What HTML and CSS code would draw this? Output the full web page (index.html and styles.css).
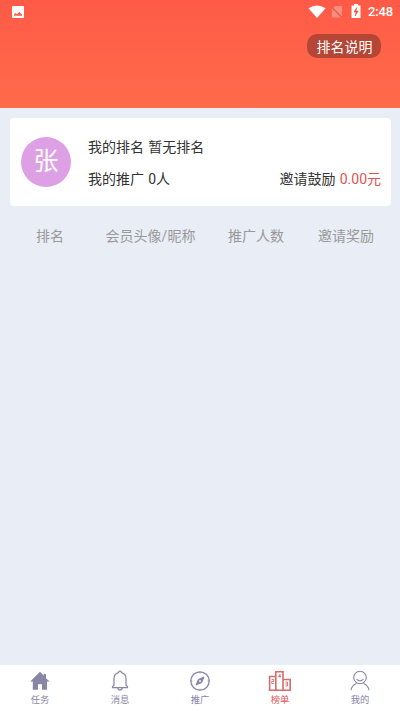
FILE: index.html
```html
<!DOCTYPE html>
<html lang="zh-CN">
<head>
<meta charset="utf-8">
<title>榜单</title>
<link rel="stylesheet" href="styles.css">
</head>
<body>
<header class="hero">
  <div class="status">
    <svg class="picture" width="12" height="12" viewBox="0 0 12 12"><rect width="12" height="12" rx="1" fill="#fff"/><path d="M2 9.700V8.500L3.500 7l1.300 1.200L7.300 6 10 8.500v1.200z" fill="#ff6048"/></svg>
    <svg class="wifi" width="18" height="14" viewBox="0 0 18 14"><path d="M.5 3.300Q9-2.100 17.500 3.300L9 13z" fill="#fff"/></svg>
    <svg class="sim" width="12" height="14" viewBox="0 0 12 14"><path d="M4 1h7v11.500H1V4z" fill="#ff8e7d"/><path d="M0 1.500 11.500 13" stroke="#e85a48" stroke-width="1.300"/></svg>
    <svg class="battery" width="10" height="15" viewBox="0 0 10 15"><path d="M3 0h4v1.500h2.500V14H.5V1.500H3z" fill="#fff"/><path d="M5.800 3.500 3 8h2l-.8 4L7.200 7H5.100z" fill="#ee4e39" stroke="#ee4e39" stroke-width=".5"/></svg>
    <span class="clock">2:48</span>
  </div>
  <button class="rules">排名说明</button>
</header>
<main class="content">
  <section class="card">
    <div class="avatar">张</div>
    <div class="details">
      <div class="line">我的排名 暂无排名</div>
      <div class="line"><span>我的推广 0人</span><span>邀请鼓励 <b class="amount">0.00元</b></span></div>
    </div>
  </section>
  <div class="columns"><span>排名</span><span>会员头像/昵称</span><span>推广人数</span><span>邀请奖励</span></div>
</main>
<nav class="tabs">
  <a class="tab"><svg width="24" height="24" viewBox="0 0 24 24"><path d="M12 2.800 2.200 12.500h2.600V20.800H10v-5.500h4v5.500h5v-8.300h2.700L18 9.200V5h-2.200v1.700z" fill="#8985a5"/></svg><span>任务</span></a>
  <a class="tab"><svg width="24" height="24" viewBox="0 0 24 24" fill="none" stroke="#8985a5" stroke-width="1.200"><path d="M10.500 3.700a1.500 1.500 0 0 1 3 0C16.700 4.500 18 7 18 10v6l1.500 1.700v1h-15v-1L6 16v-6c0-3 1.300-5.500 4.500-6.300zM9.700 18.700c.2 3 4.400 3 4.600 0"/></svg><span>消息</span></a>
  <a class="tab"><svg width="24" height="24" viewBox="0 0 24 24" fill="none" stroke="#8985a5"><circle cx="12" cy="12" r="9.200" stroke-width="1.300"/><path d="m16 8-2.400 5.600L8 16l2.400-5.600z" fill="#8985a5"/><circle cx="12" cy="12" r=".9" fill="#fff" stroke="none"/><path d="M12 3v1.300M12 19.700V21M3 12h1.300M19.700 12H21"/></svg><span>推广</span></a>
  <a class="tab active"><svg width="24" height="24" viewBox="0 0 24 24" fill="none" stroke="#d86b6b" stroke-width="1.600"><path d="M1.600 21.300V7.500h6.200v13.800zM7.800 21.300V2.700h7.200v18.600zM15 21.300V10.500h7.200v10.800z"/><path d="M3.700 10.500h2v2h-2v2h2.200M12 8.800V5.300l-1.600 2.200h2.700M17.500 13h2v4h-2m0-2h2" stroke-width=".9"/></svg><span>榜单</span></a>
  <a class="tab"><svg width="24" height="24" viewBox="0 0 24 24" fill="none" stroke="#8985a5" stroke-width="1.100"><circle cx="12" cy="8.500" r="6.300"/><path d="M8.500 10.200q3.500 3.500 7 0M3 21.200q.5-4.500 5.500-6.700M21 21.200q-.5-4.500-5.500-6.700"/></svg><span>我的</span></a>
</nav>
</body>
</html>
```
FILE: styles.css
```css
* { box-sizing: border-box; }
body {
  margin: 0;
  height: 711px;
  display: flex;
  flex-direction: column;
  background: #e9edf5;
  color: #333;
  font: 14px/20px Roboto, "Noto Sans CJK SC", sans-serif;
  overflow: hidden;
}
.hero {
  height: 108px;
  flex: none;
  background: linear-gradient(#ff5a47, #ff6c4a);
  display: flex;
  flex-direction: column;
  align-items: flex-end;
}
.status {
  width: 100%;
  height: 24px;
  padding: 0 8px 0 12px;
  display: flex;
  align-items: center;
  color: #fff;
}
.picture { margin-right: auto; }
.wifi { margin-right: 5px; }
.sim { margin-right: 8px; }
.battery { margin-right: 7px; position: relative; top: -1px; }
.clock { font-size: 13px; font-weight: 500; width: 24px; white-space: nowrap; letter-spacing: -.15px; }
.rules {
  width: 74px;
  height: 24px;
  margin: 10px 19px 0 0;
  padding: 0 0 0 1px;
  border: 0;
  border-radius: 10px;
  background: #b54534;
  color: #fff;
  font: inherit;
  line-height: 26px;
}
.content { flex: 1; padding: 10px 9px 0 10px; }
.card {
  height: 88px;
  display: flex;
  align-items: center;
  padding: 0 10px 0 11px;
  border-radius: 4px;
  background: #fff;
}
.avatar {
  width: 50px;
  height: 50px;
  flex: none;
  border-radius: 50%;
  background: #dea0e5;
  color: #fff;
  font-size: 25px;
  line-height: 50px;
  text-align: center;
}
.details { flex: 1; margin-left: 17px; padding-top: 1px; display: grid; gap: 12px; word-spacing: .7px; }
.line { display: flex; justify-content: space-between; }
.amount { color: #df5350; font-weight: 400; }
.columns {
  display: grid;
  grid-template-columns: 80px 121px 90px 90px;
  margin-top: 20px;
  color: #999;
  text-align: center;
}
.tabs {
  height: 46px;
  flex: none;
  display: flex;
  background: #fff;
}
.tab {
  flex: 1;
  display: flex;
  flex-direction: column;
  align-items: center;
  padding-top: 4px;
  color: #8985a5;
  font-size: 9.300px;
  line-height: 14px;
}
.active { color: #e45659; }
```
